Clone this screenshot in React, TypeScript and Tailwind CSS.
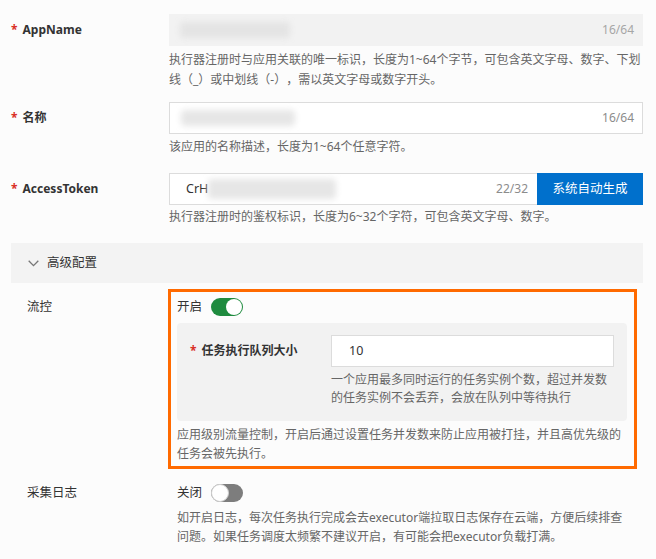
import React from "react";

const font = { fontFamily: '"Noto Sans", "Noto Sans CJK SC", sans-serif' };

function Blur({ w, className = "" }: { w: number; className?: string }) {
  return (
    <div
      className={"h-[16px] rounded-sm bg-[#e3e3e3] blur-[3px] " + className}
      style={{ width: w }}
    />
  );
}

function Toggle({ on }: { on: boolean }) {
  return on ? (
    <div className="relative h-[18px] w-[32px] rounded-full bg-[#1f8b3f]">
      <div className="absolute right-[1px] top-[1px] h-[16px] w-[16px] rounded-full bg-white" />
    </div>
  ) : (
    <div className="relative h-[18px] w-[32px] rounded-full bg-[#7d7d7d]">
      <div className="absolute left-0 top-0 h-[18px] w-[18px] rounded-full border border-[#cfcfcf] bg-white" />
    </div>
  );
}

function Req({ text }: { text: string }) {
  return (
    <span className="whitespace-nowrap text-[12px] font-bold text-[#333]">
      <span className="mr-[5px] text-[#d93026]">*</span>
      {text}
    </span>
  );
}

export default function App() {
  return (
    <div className="h-[559px] w-[656px] overflow-hidden bg-[#fcfcfc] [text-spacing-trim:space-all]" style={font}>
      <div className="w-[643px] pt-[14px]">
        {/* AppName */}
        <div className="flex">
          <div className="flex h-[32px] w-[169px] items-center pl-[11px]">
            <Req text="AppName" />
          </div>
          <div className="w-[474px]">
            <div className="flex h-[32px] items-center justify-between bg-[#f2f2f2] pl-[11px] pr-[9px]">
              <Blur w={110} className="bg-[#e4e4e4]" />
              <span className="text-[12px] text-[#a6a6a6]">16/64</span>
            </div>
            <div className="mt-[4px] whitespace-nowrap text-[12px] leading-[20px] text-[#666]">
              执行器注册时与应用关联的唯一标识，长度为1~64个字节，可包含英文字母、数字、下划
              <br />
              线（_）或中划线（-），需以英文字母或数字开头。
            </div>
          </div>
        </div>

        {/* 名称 */}
        <div className="mt-[12px] flex">
          <div className="flex h-[32px] w-[169px] items-center pl-[11px]">
            <Req text="名称" />
          </div>
          <div className="w-[474px]">
            <div className="flex h-[32px] items-center justify-between border border-[#dcdcdc] bg-white pl-[11px] pr-[8px]">
              <Blur w={114} className="bg-[#e6e6e6]" />
              <span className="text-[12px] text-[#8c8c8c]">16/64</span>
            </div>
            <div className="mt-[3px] whitespace-nowrap text-[12px] leading-[20px] text-[#666]">
              该应用的名称描述，长度为1~64个任意字符。
            </div>
          </div>
        </div>

        {/* AccessToken */}
        <div className="mt-[16px] flex">
          <div className="flex h-[32px] w-[169px] items-center pl-[11px]">
            <Req text="AccessToken" />
          </div>
          <div className="w-[474px]">
            <div className="flex h-[32px]">
              <div className="flex flex-1 items-center justify-between border border-[#dcdcdc] border-r-0 bg-white pl-[16px] pr-[9px]">
                <div className="flex items-center">
                  <span className="text-[12.5px] text-[#333]">CrH</span>
                  <Blur w={128} className="h-[20px] bg-[#e6e6e6]" />
                </div>
                <span className="text-[12px] text-[#8c8c8c]">22/32</span>
              </div>
              <div className="flex w-[106px] items-center justify-center bg-[#0070cc] text-[12.5px] text-white">
                系统自动生成
              </div>
            </div>
            <div className="mt-[2px] whitespace-nowrap text-[12px] leading-[20px] text-[#666]">
              执行器注册时的鉴权标识，长度为6~32个字符，可包含英文字母、数字。
            </div>
          </div>
        </div>

        {/* 高级配置 */}
        <div className="ml-[11px] mt-[16px] flex h-[40px] items-center bg-[#f3f3f3] pl-[17px]">
          <svg width="11" height="7" viewBox="0 0 11 7" className="mr-[8px]">
            <path d="M0.7 0.7 L5.5 5.6 L10.3 0.7" fill="none" stroke="#777" strokeWidth="1.3" />
          </svg>
          <span className="text-[12.5px] text-[#333]">高级配置</span>
        </div>

        {/* 流控 */}
        <div className="mt-[6px] flex">
          <div className="w-[168px] pl-[27px] pt-[9px] text-[12.5px] leading-[18px] text-[#333]">流控</div>
          <div className="w-[469px] border-[3px] border-[#ff6a00] pb-[3px] pl-[6px] pr-[7px] pt-[6px]">
            <div className="flex h-[18px] items-center">
              <span className="mr-[9px] text-[12.5px] text-[#333]">开启</span>
              <Toggle on />
            </div>
            <div className="mt-[7px] flex rounded-[4px] bg-[#f2f2f2] pb-[14px] pr-[13px] pt-[12px]">
              <div className="flex h-[32px] w-[154px] items-center pl-[13px]">
                <Req text="任务执行队列大小" />
              </div>
              <div className="flex-1">
                <div className="flex h-[32px] items-center border border-[#dcdcdc] bg-white pl-[17px] text-[12.5px] text-[#333]">
                  10
                </div>
                <div className="mt-[4px] whitespace-nowrap text-[12px] leading-[18px] text-[#666]">
                  一个应用最多同时运行的任务实例个数，超过并发数
                  <br />
                  的任务实例不会丢弃，会放在队列中等待执行
                </div>
              </div>
            </div>
            <div className="mt-[4px] whitespace-nowrap text-[12px] leading-[19px] text-[#666]">
              应用级别流量控制，开启后通过设置任务并发数来防止应用被打挂，并且高优先级的
              <br />
              任务会被先执行。
            </div>
          </div>
        </div>

        {/* 采集日志 */}
        <div className="mt-[15px] flex">
          <div className="w-[177px] pl-[27px] text-[12.5px] leading-[18px] text-[#333]">采集日志</div>
          <div>
            <div className="flex h-[18px] items-center">
              <span className="mr-[9px] text-[12.5px] text-[#333]">关闭</span>
              <Toggle on={false} />
            </div>
            <div className="mt-[6px] whitespace-nowrap text-[12px] leading-[19px] text-[#666]">
              如开启日志，每次任务执行完成会去executor端拉取日志保存在云端，方便后续排查
              <br />
              问题。如果任务调度太频繁不建议开启，有可能会把executor负载打满。
            </div>
          </div>
        </div>
      </div>
    </div>
  );
}
